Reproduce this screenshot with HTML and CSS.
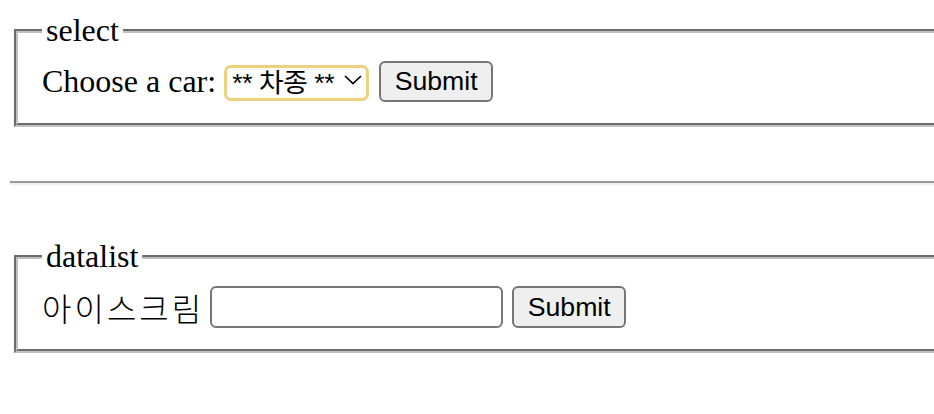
FILE: index.html
```html
<!DOCTYPE html>
<html lang="ko">
<head>
<meta charset="utf-8">
<title>select / datalist</title>
<link rel="stylesheet" href="styles.css">
</head>
<body>
<fieldset class="box">
  <legend class="box-title">select</legend>
  <div class="row">
    <label class="label" for="car">Choose a car:</label>
    <div class="select-wrap">
      <select id="car" class="select">
        <option>** 차종 **</option>
        <option>Volvo</option>
        <option>Saab</option>
        <option>Audi</option>
      </select>
      <svg class="chevron" width="18" height="10" viewBox="0 0 18 10"><polyline points="1,1 9,8.6 17,1" fill="none" stroke="#000" stroke-width="1.7"/></svg>
    </div>
    <button class="btn" type="button">Submit</button>
  </div>
</fieldset>
<hr class="divider">
<fieldset class="box">
  <legend class="box-title">datalist</legend>
  <div class="row">
    <label class="label label-ko" for="ice">아이스크림</label>
    <input id="ice" class="text-input" list="icecream">
    <datalist id="icecream">
      <option value="바닐라"></option>
      <option value="초콜릿"></option>
      <option value="딸기"></option>
    </datalist>
    <button class="btn btn-second" type="button">Submit</button>
  </div>
</fieldset>
</body>
</html>
```

FILE: styles.css
```css
html {
  overflow: hidden;
  background: #fff;
}

body {
  margin: 0;
  padding: 12px 0 0 10px;
  width: 1100px;
  font-family: "Liberation Serif", "Noto Sans CJK KR", serif;
  font-size: 32px;
  color: #000;
}

.box {
  margin: 0 4px;
  padding: 11px 24px 21px;
  border: 4px groove #c0c0c0;
  min-width: 0;
}

.box-title {
  padding: 0 4px;
  font-size: 32px;
  line-height: 37px;
}

.row {
  display: flex;
  align-items: center;
  height: 42px;
}

.label {
  font-size: 32px;
  line-height: 37px;
  margin-right: 8px;
  white-space: nowrap;
}

.label-ko {
  font-family: "Noto Sans CJK KR", sans-serif;
  font-weight: 300;
  font-size: 32px;
  letter-spacing: 3px;
  margin-right: 6px;
  padding-top: 1px;
}

.select-wrap {
  position: relative;
  width: 145px;
  height: 36px;
}

.select {
  appearance: none;
  -webkit-appearance: none;
  box-sizing: border-box;
  width: 145px;
  height: 36px;
  margin: 0;
  padding: 0 0 0 5px;
  border: 3px solid #efd07e;
  border-radius: 7px;
  background: #fff;
  font-family: "Liberation Sans", "Noto Sans CJK KR", sans-serif;
  font-size: 26.67px;
  letter-spacing: -0.4px;
  color: #000;
  outline: none;
}

.chevron {
  position: absolute;
  left: 120px;
  top: 12px;
  pointer-events: none;
}

.btn {
  box-sizing: border-box;
  width: 114px;
  height: 41px;
  margin: 0 0 0 10px;
  padding: 0;
  border: 2px solid #767676;
  border-radius: 6px;
  background: #efefef;
  font-family: "Liberation Sans", sans-serif;
  font-size: 26.67px;
  color: #000;
}

.btn-second {
  height: 42px;
  margin-left: 9px;
}

.text-input {
  box-sizing: border-box;
  width: 293px;
  height: 42px;
  margin: 0;
  padding: 0 6px;
  border: 2px solid #767676;
  border-radius: 6px;
  background: #fff;
  font-family: "Liberation Sans", sans-serif;
  font-size: 26.67px;
  outline: none;
}

.divider {
  margin: 54px 0 53px;
  height: 0;
  border: 0;
  border-top: 2px solid #9a9a9a;
  border-bottom: 2px solid #eeeeee;
}
```
